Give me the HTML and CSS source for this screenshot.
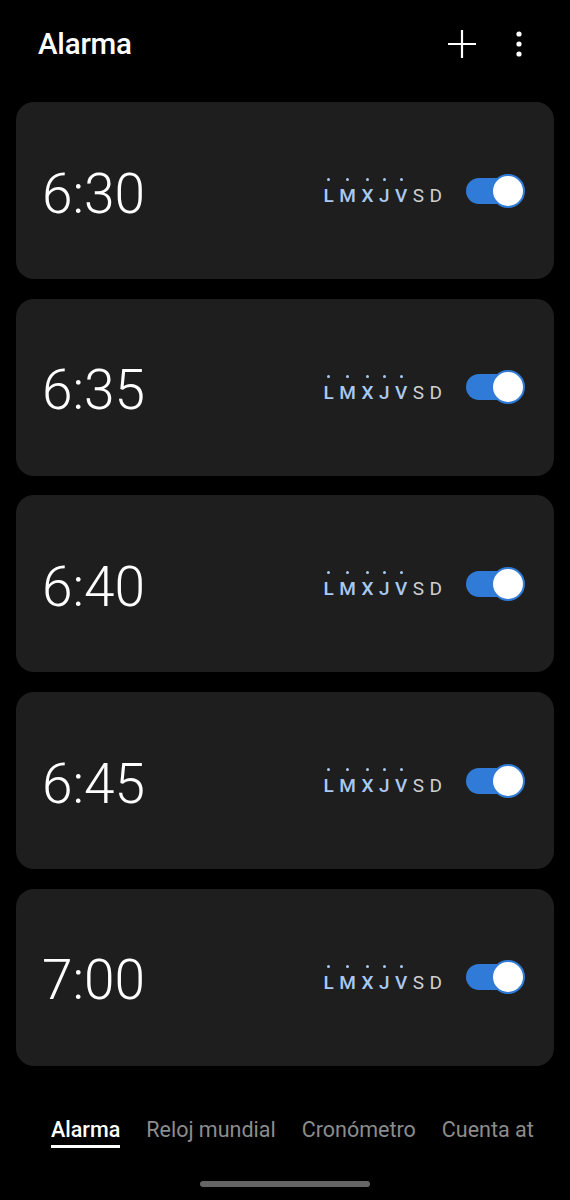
FILE: index.html
```html
<!DOCTYPE html>
<html lang="es">
<head>
  <meta charset="UTF-8">
  <meta name="viewport" content="width=device-width, initial-scale=1.0">
  <title>Alarma</title>
  <link rel="stylesheet" href="styles.css">
</head>
<body>

  <header class="topbar">
    <h1>Alarma</h1>
    <div class="actions">
      <svg class="icon" width="32" height="32" viewBox="0 0 32 32">
        <path d="M16 2 V30 M2 16 H30" stroke="#fff" stroke-width="2.2" fill="none"/>
      </svg>
      <svg class="icon" width="12" height="32" viewBox="0 0 12 32">
        <circle cx="6" cy="6" r="2.6" fill="#fff"/>
        <circle cx="6" cy="16" r="2.6" fill="#fff"/>
        <circle cx="6" cy="26" r="2.6" fill="#fff"/>
      </svg>
    </div>
  </header>

  <main class="list">
    <div class="card">
      <span class="time">6:30</span>
      <div class="days">
        <span class="day on">L</span><span class="day on">M</span><span class="day on">X</span><span class="day on">J</span><span class="day on">V</span><span class="day">S</span><span class="day">D</span>
      </div>
      <span class="toggle"><span class="thumb"></span></span>
    </div>
    <div class="card">
      <span class="time">6:35</span>
      <div class="days">
        <span class="day on">L</span><span class="day on">M</span><span class="day on">X</span><span class="day on">J</span><span class="day on">V</span><span class="day">S</span><span class="day">D</span>
      </div>
      <span class="toggle"><span class="thumb"></span></span>
    </div>
    <div class="card">
      <span class="time">6:40</span>
      <div class="days">
        <span class="day on">L</span><span class="day on">M</span><span class="day on">X</span><span class="day on">J</span><span class="day on">V</span><span class="day">S</span><span class="day">D</span>
      </div>
      <span class="toggle"><span class="thumb"></span></span>
    </div>
    <div class="card">
      <span class="time">6:45</span>
      <div class="days">
        <span class="day on">L</span><span class="day on">M</span><span class="day on">X</span><span class="day on">J</span><span class="day on">V</span><span class="day">S</span><span class="day">D</span>
      </div>
      <span class="toggle"><span class="thumb"></span></span>
    </div>
    <div class="card">
      <span class="time">7:00</span>
      <div class="days">
        <span class="day on">L</span><span class="day on">M</span><span class="day on">X</span><span class="day on">J</span><span class="day on">V</span><span class="day">S</span><span class="day">D</span>
      </div>
      <span class="toggle"><span class="thumb"></span></span>
    </div>
  </main>

  <nav class="tabs">
    <span class="tab active">Alarma</span>
    <span class="tab">Reloj mundial</span>
    <span class="tab">Cronómetro</span>
    <span class="tab">Cuenta atrás</span>
  </nav>

  <div class="homebar"></div>

</body>
</html>
```

FILE: styles.css
```css
body {
  margin: 0;
  background: #000;
  color: #fff;
  font-family: Roboto, "Noto Sans", sans-serif;
  width: 570px;
  height: 1200px;
  overflow: hidden;
}
.topbar {
  height: 88px;
  display: flex;
  align-items: center;
  justify-content: space-between;
  padding: 0 45px 0 38px;
}
h1 {
  margin: 0;
  font-size: 29.5px;
  font-weight: 500;
  letter-spacing: -0.2px;
}
.actions {
  display: flex;
  align-items: center;
  gap: 35px;
}
.icon {
  display: block;
}
.list {
  display: flex;
  flex-direction: column;
  gap: 19.7px;
  padding: 14px 16px 0;
}
.card {
  height: 177px;
  background: #1e1e1e;
  border-radius: 18px;
  display: flex;
  align-items: center;
  padding: 0 32px 0 26px;
}
.time {
  font-size: 55px;
  font-weight: 300;
  flex: 1;
  padding-top: 6px;
}
.days {
  display: flex;
  gap: 5.5px;
  margin-right: 24px;
  padding-top: 4px;
}
.day {
  display: flex;
  flex-direction: column;
  align-items: center;
  font-size: 19px;
  color: #d0d0d0;
}
.day.on {
  color: #a9c9f2;
  font-weight: 500;
}
.day::before {
  content: "";
  width: 3px;
  height: 3px;
  border-radius: 50%;
  margin-bottom: 3px;
  background: transparent;
}
.day.on::before {
  background: #a9c9f2;
}
.toggle {
  position: relative;
  width: 56px;
  height: 26px;
  border-radius: 13px;
  background: #2f7bd7;
}
.thumb {
  position: absolute;
  right: -3px;
  top: -4px;
  width: 30px;
  height: 30px;
  border-radius: 50%;
  background: #fff;
  border: 2px solid #2f7bd7;
}
.tabs {
  margin: 51px 36px 0 51px;
  display: flex;
  gap: 26px;
  overflow: hidden;
  white-space: nowrap;
}
.tab {
  font-size: 21.5px;
  color: #8c8c8c;
  padding-bottom: 3px;
  flex-shrink: 0;
}
.tab.active {
  color: #fff;
  font-weight: 500;
  border-bottom: 3px solid #fff;
}
.homebar {
  width: 170px;
  height: 6px;
  border-radius: 3px;
  background: #666;
  margin: 33px auto 0;
}
```
